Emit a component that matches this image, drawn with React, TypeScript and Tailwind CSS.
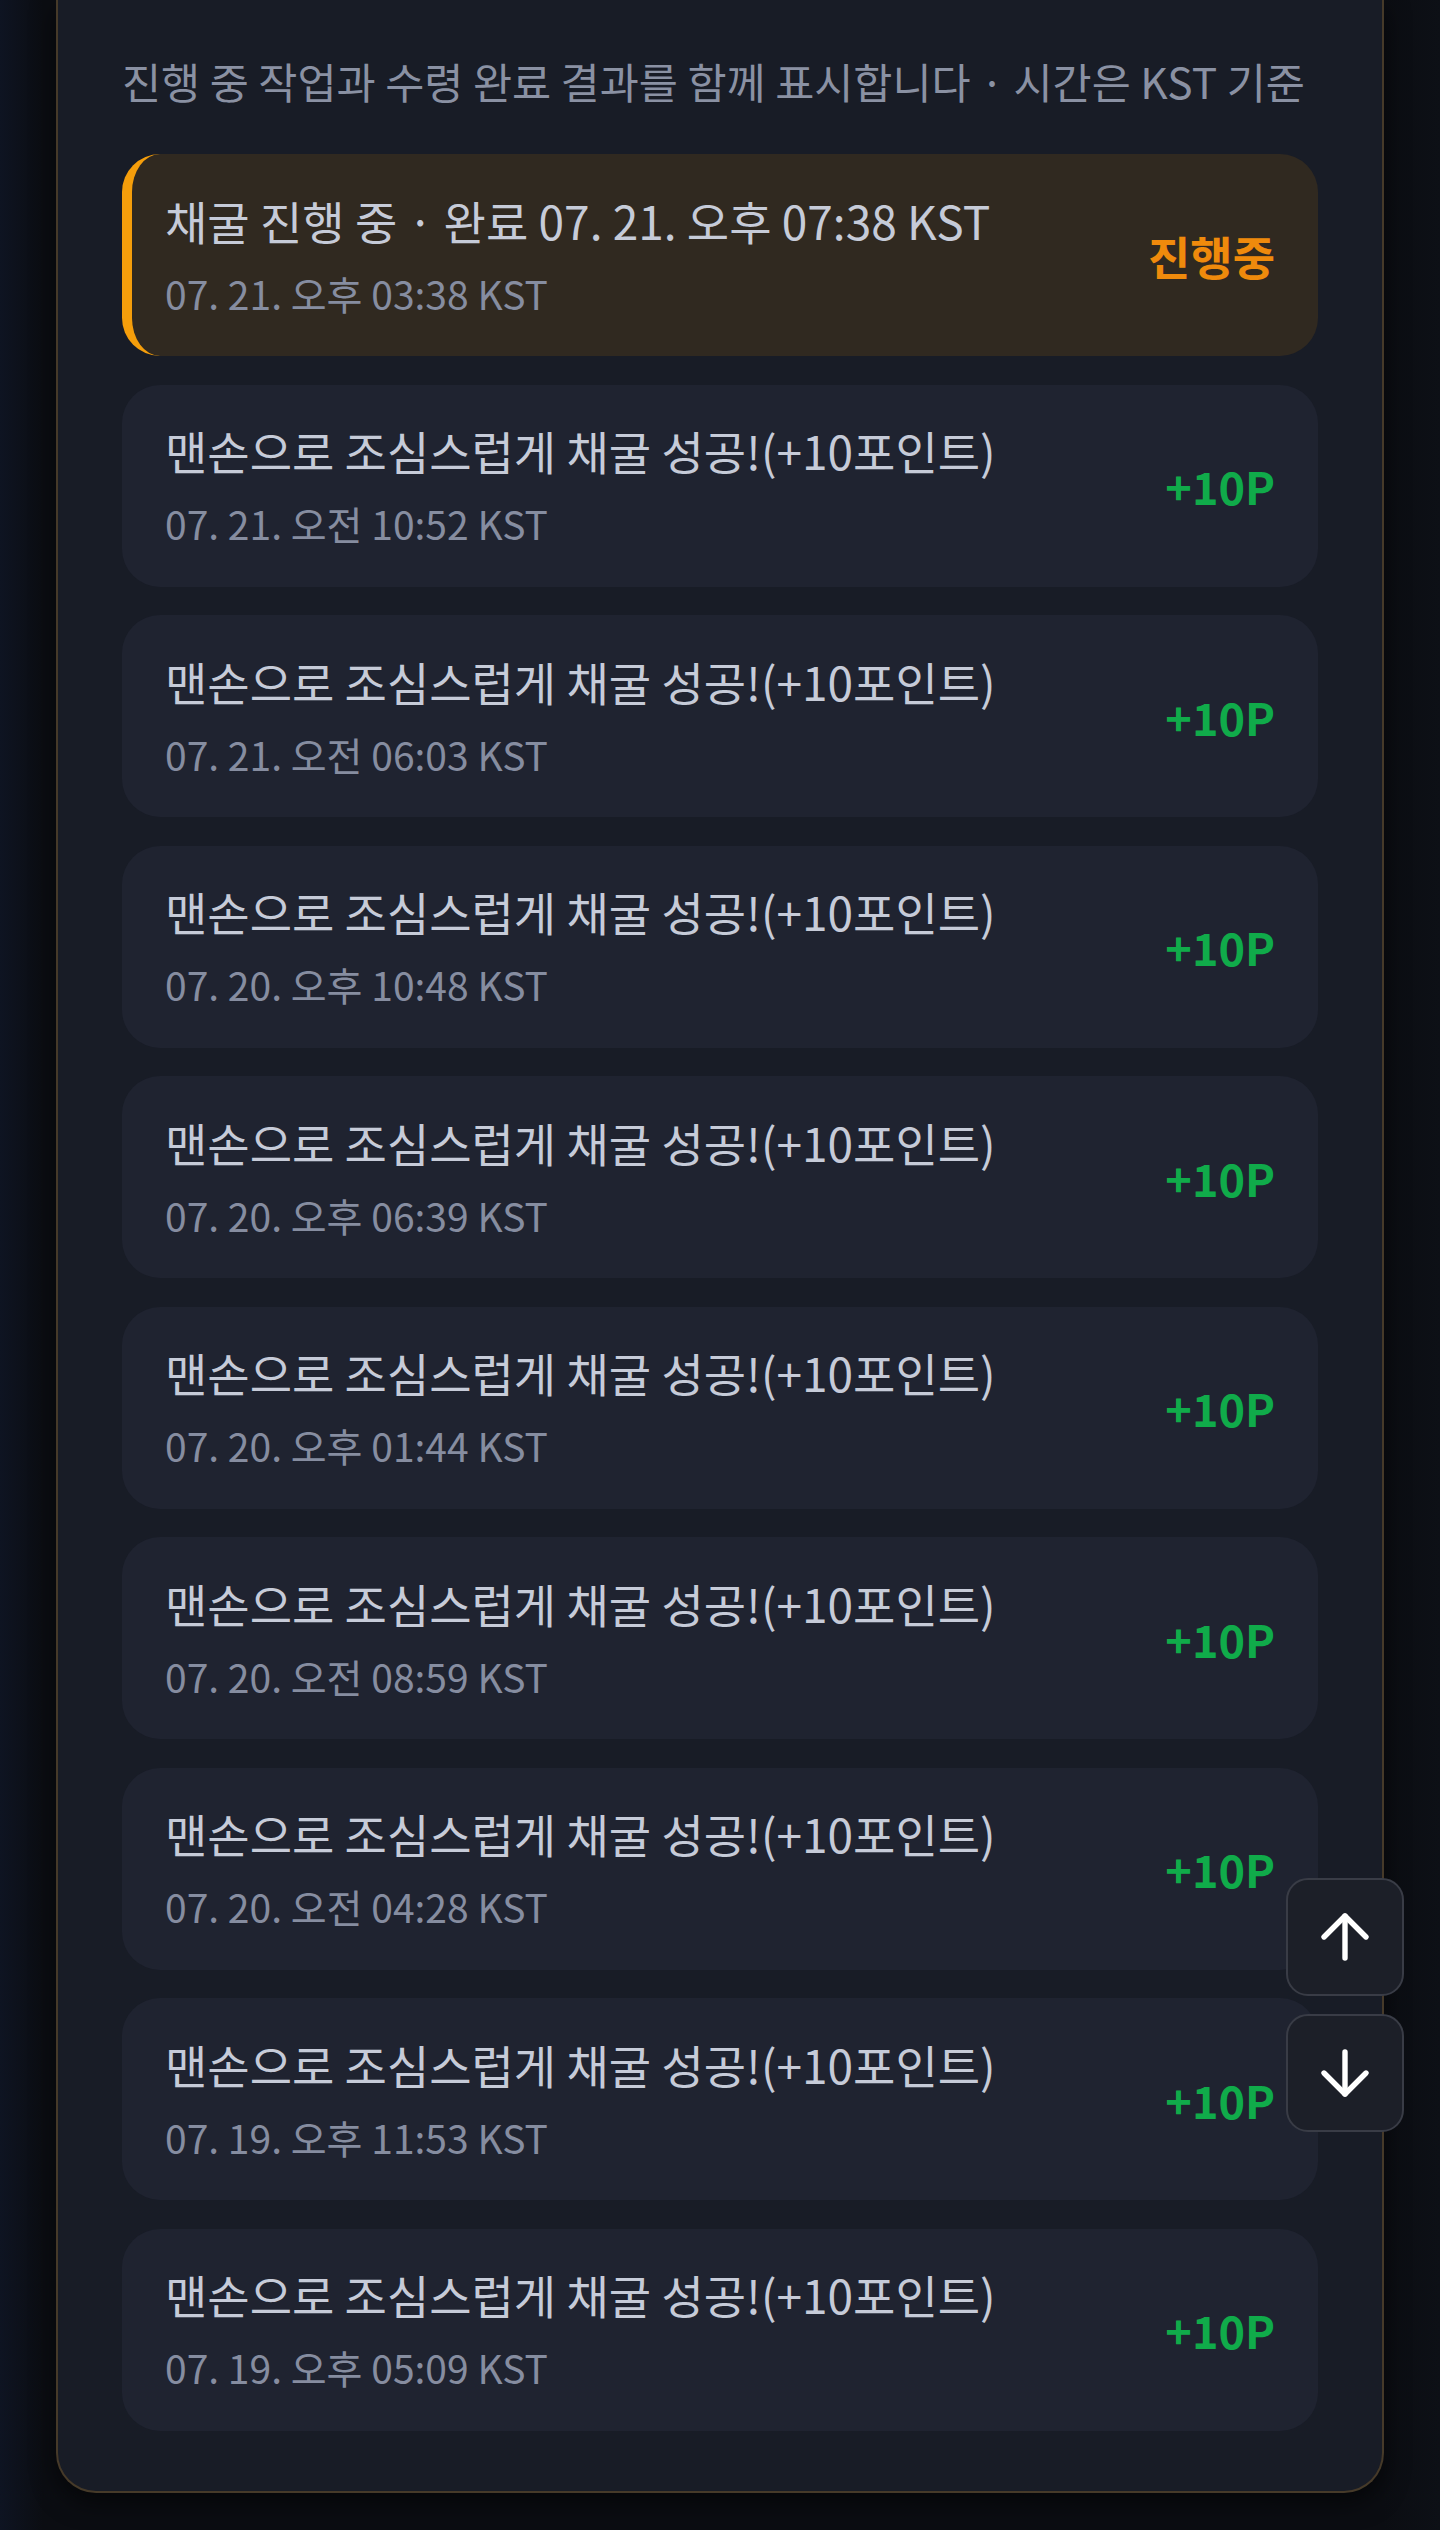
// Mining history panel: in-progress job plus claimed rewards (KST)
import { ArrowUp, ArrowDown } from "lucide-react";

type Entry = {
  title: string;
  time: string;
  status: "running" | "done";
  label: string;
};

const entries: Entry[] = [
  { title: "채굴 진행 중 · 완료 07. 21. 오후 07:38 KST", time: "07. 21. 오후 03:38 KST", status: "running", label: "진행중" },
  { title: "맨손으로 조심스럽게 채굴 성공!(+10포인트)", time: "07. 21. 오전 10:52 KST", status: "done", label: "+10P" },
  { title: "맨손으로 조심스럽게 채굴 성공!(+10포인트)", time: "07. 21. 오전 06:03 KST", status: "done", label: "+10P" },
  { title: "맨손으로 조심스럽게 채굴 성공!(+10포인트)", time: "07. 20. 오후 10:48 KST", status: "done", label: "+10P" },
  { title: "맨손으로 조심스럽게 채굴 성공!(+10포인트)", time: "07. 20. 오후 06:39 KST", status: "done", label: "+10P" },
  { title: "맨손으로 조심스럽게 채굴 성공!(+10포인트)", time: "07. 20. 오후 01:44 KST", status: "done", label: "+10P" },
  { title: "맨손으로 조심스럽게 채굴 성공!(+10포인트)", time: "07. 20. 오전 08:59 KST", status: "done", label: "+10P" },
  { title: "맨손으로 조심스럽게 채굴 성공!(+10포인트)", time: "07. 20. 오전 04:28 KST", status: "done", label: "+10P" },
  { title: "맨손으로 조심스럽게 채굴 성공!(+10포인트)", time: "07. 19. 오후 11:53 KST", status: "done", label: "+10P" },
  { title: "맨손으로 조심스럽게 채굴 성공!(+10포인트)", time: "07. 19. 오후 05:09 KST", status: "done", label: "+10P" },
];

export default function App() {
  return (
    <div className="min-h-screen bg-[linear-gradient(90deg,#0e1422_0%,#0b0d12_3%,#0b0d12_96%,#0d1016_100%)] pb-[34px] font-['Noto_Sans_CJK_KR','Noto_Sans',sans-serif]">
      <section className="mx-[56px] rounded-b-[40px] border-2 border-t-0 border-[#463a29] bg-[#181c26] px-[64px] pb-[60px] pt-[51px] shadow-[0_10px_24px_rgba(0,0,0,0.55)]">
        <p className="whitespace-nowrap text-[42.5px] leading-[60px] text-[#8a91a3]">
          진행 중 작업과 수령 완료 결과를 함께 표시합니다 · 시간은 KST 기준
        </p>

        <ul className="mt-[43px] flex flex-col gap-[28.5px]">
          {entries.map((e, i) => (
            <li
              key={i}
              className={`flex h-[202px] items-center justify-between rounded-[38px] pr-[43px] ${
                e.status === "running"
                  ? "border-l-[10px] border-[#f59e0b] bg-[#302920] pl-[33px]"
                  : "bg-[#1f2330] pl-[43px]"
              }`}
            >
              <div className="flex flex-col gap-[13px] pt-[2px]">
                <span className="text-[46px] leading-[60px] text-[#c6cbd8]">{e.title}</span>
                <span className="text-[39px] leading-[60px] text-[#868da0]">{e.time}</span>
              </div>
              <span
                className={`font-bold leading-none ${
                  e.status === "running" ? "text-[46px] text-[#ef8a0c]" : "text-[45px] text-[#10ab4a]"
                }`}
              >
                {e.label}
              </span>
            </li>
          ))}
        </ul>
      </section>

      <div className="fixed bottom-[398px] right-[36px] flex flex-col gap-[18px]">
        <button className="flex h-[118px] w-[118px] items-center justify-center rounded-[22px] border-2 border-[#393c46] bg-[#1c1f28] text-white">
          <ArrowUp size={72} strokeWidth={1.8} />
        </button>
        <button className="flex h-[118px] w-[118px] items-center justify-center rounded-[22px] border-2 border-[#393c46] bg-[#1c1f28] text-white">
          <ArrowDown size={72} strokeWidth={1.8} />
        </button>
      </div>
    </div>
  );
}
